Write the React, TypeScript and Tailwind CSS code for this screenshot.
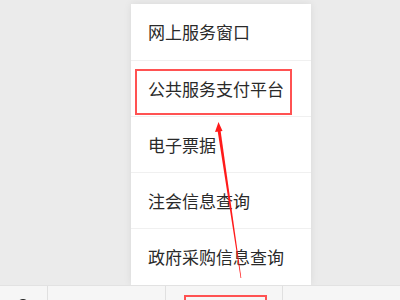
import React from "react";

const items = [
  "网上服务窗口",
  "公共服务支付平台",
  "电子票据",
  "注会信息查询",
  "政府采购信息查询",
];

const App: React.FC = () => {
  return (
    <div
      className="relative flex h-[300px] w-[400px] flex-col overflow-hidden bg-[#ebebeb]"
      style={{ fontFamily: '"Noto Sans CJK SC", "Noto Sans", sans-serif' }}
    >
      <div className="flex-1 pt-[4px] pl-[131px]">
        <div className="w-[180px] bg-white shadow-[0_0_8px_rgba(0,0,0,0.08)]">
          {items.map((label, i) => (
            <div
              key={label}
              className={`relative flex h-[56px] items-center pl-[17px] text-[17px] text-[#2a2a2a] ${
                i < items.length - 1 ? "border-b border-[#f0f0f0]" : ""
              } ${i === 0 ? "h-[57px]" : ""} ${i === items.length - 1 ? "h-[54px]" : ""}`}
            >
              {label}
            </div>
          ))}
        </div>
      </div>

      {/* bottom tab bar */}
      <div className="flex h-[17px] border-t border-[#e2e2e2] bg-[#f6f6f6]">
        <div className="relative w-[48px] border-r border-[#e0e0e0]">
          <div className="absolute left-[17px] top-[13px] h-[12px] w-[12px] rounded-full bg-[#222]" />
        </div>
        <div className="w-[118px] border-r border-[#e0e0e0]" />
        <div className="relative w-[117px] border-r border-[#e0e0e0]">
          <div className="absolute left-[18px] top-[9px] h-[20px] w-[83px] border-2 border-[#ff5252]" />
        </div>
        <div className="flex-1" />
      </div>

      {/* annotation highlight + arrow */}
      <div className="pointer-events-none absolute left-[135px] top-[69px] h-[46px] w-[157px] border-2 border-[#ff5252]" />
      <svg
        className="pointer-events-none absolute left-0 top-0"
        width="400"
        height="300"
        viewBox="0 0 400 300"
      >
        <polygon points="218.5,122 215,132 222.5,131" fill="#ff1a1a" />
        <polygon points="217.5,130 220.5,130 241.3,278 240.6,278" fill="#ff1a1a" />
      </svg>
    </div>
  );
};

export default App;
